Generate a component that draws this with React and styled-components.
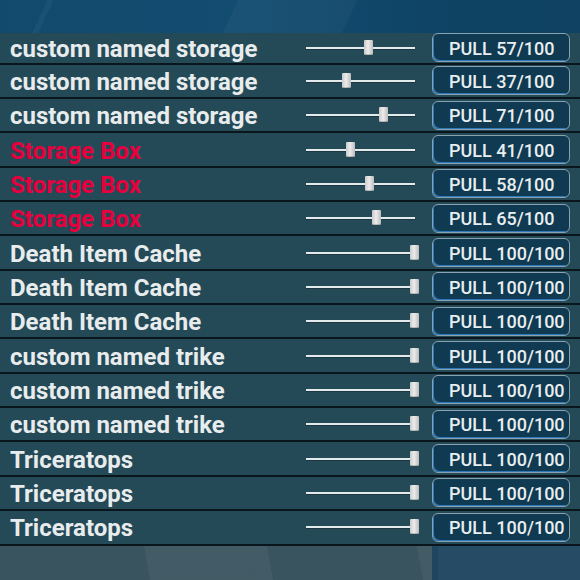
import styled, { createGlobalStyle } from "styled-components";

const GlobalStyle = createGlobalStyle`
  html, body {
    margin: 0;
    padding: 0;
    width: 580px;
    height: 580px;
    overflow: hidden;
    background: #3c5560;
    font-family: Roboto, "Noto Sans", "Liberation Sans", sans-serif;
  }
`;

const Screen = styled.div`
  width: 580px;
  height: 580px;
  display: flex;
  flex-direction: column;
  background:
    linear-gradient(90deg, transparent 0 432px, #1f4560 432px 438px, #264b64 438px 100%),
    linear-gradient(80deg, transparent 0 22%, rgba(255, 255, 255, 0.04) 22% 40%, transparent 40% 62%, rgba(255, 255, 255, 0.04) 62% 72%, transparent 72%),
    linear-gradient(180deg, #3e5964 0%, #3a545f 100%);
`;

const Sky = styled.div`
  height: 33px;
  flex-shrink: 0;
  background:
    linear-gradient(115deg, transparent 0 8%, rgba(255, 255, 255, 0.04) 8% 9%, transparent 9% 40%, rgba(255, 255, 255, 0.035) 40% 60%, transparent 60%),
    linear-gradient(90deg, #114a6d 0%, #124c70 40%, #0f4466 75%, #0f4262 100%);
`;

const List = styled.div`
  display: flex;
  flex-direction: column;
`;

const Row = styled.div`
  height: 32.35px;
  display: flex;
  align-items: center;
  background: #244a58;
  border-bottom: 2px solid #0a161b;
  padding: 0 10px;
  box-sizing: content-box;

  &:first-child {
    height: 29.7px;
  }
`;

const Label = styled.div`
  flex: 1;
  padding-top: 2px;
  font-size: 24px;
  font-weight: 700;
  line-height: 1;
  color: ${(p) => (p.$red ? "#e6003d" : "#e8eced")};
  white-space: nowrap;
`;

const Slider = styled.div`
  position: relative;
  width: 109px;
  height: 16px;
  margin-right: 17px;
`;

const Track = styled.div`
  position: absolute;
  left: 0;
  right: 0;
  top: 7px;
  height: 2px;
  background: #e2eaec;
  box-shadow: 0 1px 0 rgba(0, 0, 0, 0.25);
`;

const Thumb = styled.div`
  position: absolute;
  top: 0;
  width: 9px;
  height: 15px;
  border-radius: 1px;
  background: linear-gradient(90deg, #c9c9c9 0%, #ececec 45%, #bdbdbd 100%);
  box-shadow: inset 0 -1px 0 rgba(0, 0, 0, 0.2);
`;

const PullButton = styled.button`
  width: 138px;
  height: 29px;
  box-sizing: border-box;
  border: 1px solid #8aa2b0;
  border-radius: 6px;
  background: #0f3a51;
  box-shadow: inset 2px -2px 0 -1px #2d78b8;
  color: #e9eef0;
  font-family: Roboto, "Noto Sans", "Liberation Sans", sans-serif;
  font-size: 18px;
  font-weight: 500;
  text-align: left;
  padding: 1px 0 0 16px;
  cursor: pointer;
`;

const items = [
  { name: "custom named storage", pull: 57 },
  { name: "custom named storage", pull: 37 },
  { name: "custom named storage", pull: 71 },
  { name: "Storage Box", pull: 41, red: true },
  { name: "Storage Box", pull: 58, red: true },
  { name: "Storage Box", pull: 65, red: true },
  { name: "Death Item Cache", pull: 100 },
  { name: "Death Item Cache", pull: 100 },
  { name: "Death Item Cache", pull: 100 },
  { name: "custom named trike", pull: 100 },
  { name: "custom named trike", pull: 100 },
  { name: "custom named trike", pull: 100 },
  { name: "Triceratops", pull: 100 },
  { name: "Triceratops", pull: 100 },
  { name: "Triceratops", pull: 100 },
];

const App = () => {
  return (
    <>
      <GlobalStyle />
      <Screen>
        <Sky />
        <List>
          {items.map((item, i) => (
            <Row key={i}>
              <Label $red={item.red}>{item.name}</Label>
              <Slider>
                <Track />
                <Thumb style={{ left: `${item.pull * 1.084 - 4}px` }} />
              </Slider>
              <PullButton>PULL {item.pull}/100</PullButton>
            </Row>
          ))}
        </List>
      </Screen>
    </>
  );
};

export default App;
